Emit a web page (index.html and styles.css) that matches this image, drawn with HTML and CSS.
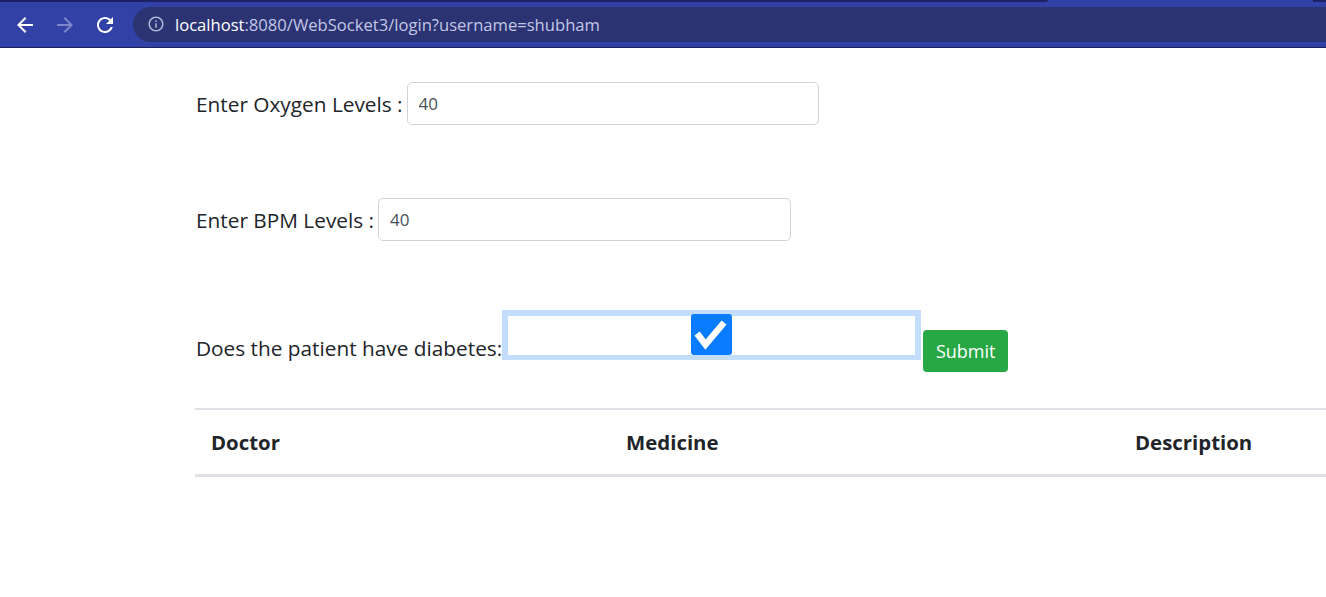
FILE: index.html
```html
<!DOCTYPE html>
<html lang="en">
<head>
<meta charset="utf-8">
<title>WebSocket3</title>
<link rel="stylesheet" href="styles.css">
</head>
<body>
<header class="chrome">
  <div class="tabstrip">
    <div class="strip-dark strip-left"></div>
    <div class="strip-tab"></div>
    <div class="strip-dark strip-right"></div>
  </div>
  <div class="toolbar">
    <span class="navbtn">
      <svg width="24" height="24" viewBox="0 0 24 24"><path fill="#ffffff" d="M20 11H7.83l5.59-5.59L12 4l-8 8 8 8 1.41-1.41L7.83 13H20v-2z"/></svg>
    </span>
    <span class="navbtn">
      <svg width="24" height="24" viewBox="0 0 24 24"><path fill="#7d86c9" d="M12 4l-1.41 1.41L16.17 11H4v2h12.17l-5.58 5.59L12 20l8-8z"/></svg>
    </span>
    <span class="navbtn">
      <svg width="24" height="24" viewBox="0 0 24 24"><path fill="#ffffff" d="M17.65 6.35C16.2 4.9 14.21 4 12 4c-4.42 0-7.99 3.58-7.990 8s3.57 8 7.99 8c3.73 0 6.84-2.55 7.73-6h-2.08c-.82 2.33-3.04 4-5.65 4-3.31 0-6-2.69-6-6s2.69-6 6-6c1.66 0 3.14.69 4.22 1.78L13 11h7V4l-2.35 2.35z"/></svg>
    </span>
    <div class="omnibox">
      <svg class="info" width="18" height="18" viewBox="0 0 24 24"><path fill="#b5b9d8" d="M11 7h2v2h-2zm0 4h2v6h-2zm1-9C6.48 2 2 6.48 2 12s4.48 10 10 10 10-4.48 10-10S17.52 2 12 2zm0 18c-4.41 0-8-3.59-8-8s3.59-8 8-8 8 3.59 8 8-3.59 8-8 8z"/></svg>
      <span class="url"><span class="host">localhost</span>:8080/WebSocket3/login?username=shubham</span>
    </div>
  </div>
</header>

<main class="page">
  <form class="vitals">
    <div class="field">
      <label class="lbl" for="oxy">Enter Oxygen Levels :</label>
      <input class="form-control oxy" id="oxy" type="text" value="40">
    </div>
    <div class="field field-bpm">
      <label class="lbl" for="bpm">Enter BPM Levels :</label>
      <input class="form-control bpm" id="bpm" type="text" value="40">
    </div>
    <div class="field-check">
      <span class="lbl lbl-check">Does the patient have diabetes:</span>
      <span class="check-frame">
        <span class="checkbox">
          <svg width="41" height="41" viewBox="0 0 41 41"><polyline points="8,22 14.5,30.5 31,11" fill="none" stroke="#ffffff" stroke-width="6.5" stroke-linejoin="miter" stroke-linecap="square"/></svg>
        </span>
      </span>
      <button type="button" class="btn-submit">Submit</button>
    </div>
  </form>

  <table class="table">
    <thead>
      <tr>
        <th class="col-doctor">Doctor</th>
        <th class="col-medicine">Medicine</th>
        <th class="col-desc">Description</th>
      </tr>
    </thead>
    <tbody></tbody>
  </table>
</main>
</body>
</html>
```

FILE: styles.css
```css
html, body {
  margin: 0;
  padding: 0;
  background: #ffffff;
  overflow: hidden;
}

body {
  font-family: "Open Sans", "Noto Sans", sans-serif;
  color: #212529;
}

/* ---------- browser chrome ---------- */
.chrome {
  height: 48px;
  background: #3241a5;
  border-bottom: 1px solid #1c2058;
  box-sizing: border-box;
}

.tabstrip {
  display: flex;
  height: 2px;
}

.strip-dark {
  background: #1d2163;
}

.strip-left {
  width: 1048px;
  border-bottom-right-radius: 2px;
}

.strip-tab {
  width: 265px;
  background: #3241a5;
}

.strip-right {
  flex: 1;
}

.toolbar {
  display: flex;
  align-items: center;
  height: 45px;
  padding-left: 5px;
}

.navbtn {
  width: 40px;
  height: 40px;
  display: flex;
  align-items: center;
  justify-content: center;
}

.omnibox {
  flex: 1;
  margin-left: 8px;
  margin-top: -1px;
  height: 35px;
  background: #2b3373;
  border-radius: 18px 0 0 18px;
  display: flex;
  align-items: center;
  padding-left: 14px;
}

.info {
  flex: none;
}

.url {
  margin-left: 10px;
  font-family: "Open Sans", sans-serif;
  font-size: 16.6px;
  color: #c3c7e4;
}

.host {
  color: #ffffff;
}

/* ---------- page ---------- */
.page {
  padding: 34px 0 0 195px;
}

.field {
  display: flex;
  align-items: center;
  height: 43px;
  gap: 4px;
}

.field-bpm {
  margin-top: 73px;
}

.lbl {
  font-size: 20.8px;
  line-height: 30px;
  color: #212529;
  padding-left: 1px;
}

.form-control {
  box-sizing: border-box;
  height: 43px;
  border: 1px solid #ced4da;
  border-radius: 5px;
  padding: 0 11px;
  font-family: "Open Sans", sans-serif;
  font-size: 17px;
  color: #495057;
  background: #fff;
  outline: none;
}

.oxy {
  width: 412px;
}

.bpm {
  width: 413px;
}

.field-check {
  margin-top: 69px;
  display: flex;
  align-items: flex-end;
  height: 62px;
}

.lbl-check {
  margin-bottom: 9px;
}

.check-frame {
  box-sizing: border-box;
  width: 419px;
  height: 50px;
  border: 6px solid #c3defc;
  border-bottom-width: 5px;
  margin-bottom: 12px;
  display: flex;
  justify-content: center;
}

.checkbox {
  width: 41px;
  height: 41px;
  margin-top: -2px;
  background: #0a7cff;
  border-radius: 3px;
  display: block;
}

.checkbox svg {
  display: block;
}

.btn-submit {
  margin-left: 2px;
  width: 85px;
  height: 42px;
  border: none;
  border-radius: 4px;
  background: #28a745;
  color: #ffffff;
  font-family: "Open Sans", sans-serif;
  font-size: 18px;
  padding: 0;
}

/* ---------- table ---------- */
.table {
  margin-top: 36px;
  width: 1131px;
  border-collapse: collapse;
  table-layout: fixed;
}

.table th {
  text-align: left;
  font-size: 20.4px;
  font-weight: 700;
  color: #212529;
  height: 66px;
  padding: 0 16px;
  border-top: 2px solid #dee2e6;
  border-bottom: 3px solid #dee2e6;
  vertical-align: middle;
  box-sizing: border-box;
}

.col-doctor {
  width: 415px;
}

.col-medicine {
  width: 509px;
}
```
